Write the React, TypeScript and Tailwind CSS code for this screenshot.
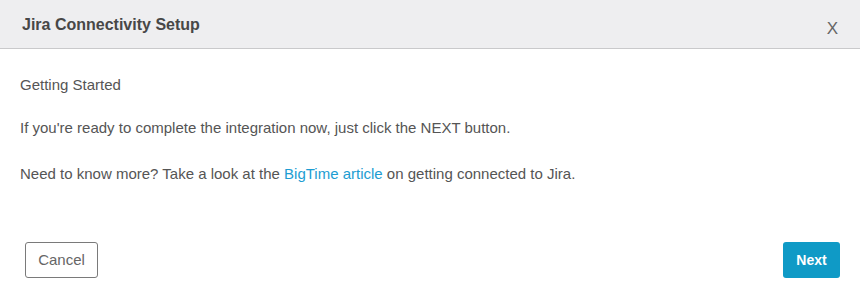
export default function App() {
  return (
    <div className="w-[860px] h-[285px] bg-white flex flex-col font-['Liberation_Sans',Arial,sans-serif]">
      <div className="h-[49px] bg-[#eeeef0] border-b border-[#c9c9cb] flex items-center justify-between pl-[22px] pr-[22px] pt-[2px]">
        <h1 className="text-[16px] font-bold text-[#474747]">Jira Connectivity Setup</h1>
        <button className="text-[17px] text-[#666] leading-none mt-[6px]">X</button>
      </div>
      <div className="px-5 pt-[26px] text-[15px] leading-5 text-[#555]">
        <p>Getting Started</p>
        <p className="mt-[23px]">If you're ready to complete the integration now, just click the NEXT button.</p>
        <p className="mt-[26px]">
          Need to know more? Take a look at the{" "}
          <a href="#" className="text-[#1d9dd2]">BigTime article</a> on getting connected to Jira.
        </p>
      </div>
      <div className="flex justify-between items-center pl-[25px] pr-5 mt-[58px]">
        <button className="h-9 w-[73px] border border-[#7a7a7a] rounded-[3px] text-[15px] text-[#666]">Cancel</button>
        <button className="h-9 w-[57px] bg-[#0f9ac6] rounded-[3px] text-[14px] font-bold text-white">Next</button>
      </div>
    </div>
  );
}
